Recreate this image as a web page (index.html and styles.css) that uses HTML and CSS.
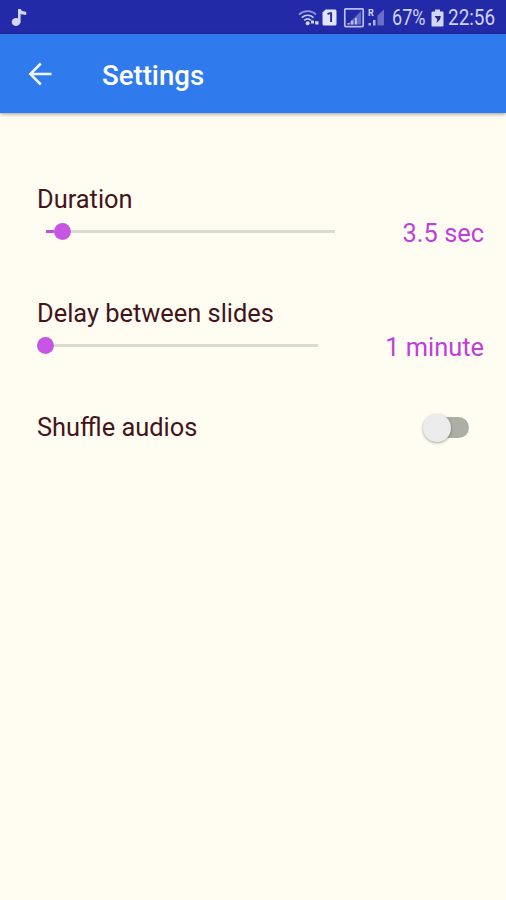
FILE: index.html
```
<!DOCTYPE html>
<html lang="en">
<head>
  <meta charset="UTF-8">
  <meta name="viewport" content="width=device-width, initial-scale=1.0">
  <title>Settings</title>
  <link rel="stylesheet" href="styles.css">
</head>
<body>
  <!-- Status bar -->
  <div class="status-bar">
    <svg class="note-icon" width="16" height="19" viewBox="0 0 16 19">
      <ellipse cx="5" cy="14" rx="4.3" ry="4"/>
      <path d="M7 1h2.600c.8 2 2.600 2.500 5.600 2.700v3.300c-2 0-4-.2-5.600-.9v8.400H7z"/>
    </svg>
    <div class="status-icons">
      <svg width="88" height="20" viewBox="0 0 88 20">
        <!-- wifi -->
        <g fill="none" stroke="#c6c9f0" stroke-width="1.7">
          <path d="M1 6.600c5-4.600 12.200-4.600 17 0" opacity=".7"/>
          <path d="M3.700 9.600c3.600-3 8.400-3 11.800 0"/>
          <path d="M6.200 12.400c2-1.800 4.800-1.800 6.800 0"/>
        </g>
        <circle cx="9.700" cy="15.200" r="2"/>
        <path d="M13 15.500V12.500h3v3zM17.200 13.300h3.300v3.300h-3.300z"/>
        <!-- sim card -->
        <path d="M27.500 1.500H37a1.500 1.500 0 0 1 1.500 1.500v13a1.500 1.500 0 0 1-1.500 1.500H26a1.500 1.500 0 0 1-1.500-1.500V4.500z" class="sim"/>
        <path d="M29.500 6.200l2.400-1h1.200v8.800" fill="none" stroke="#232aa5" stroke-width="1.900"/>
        <!-- boxed signal -->
        <rect x="46.800" y="0.800" width="18.400" height="17.800" rx="1" fill="none" stroke="#b9bdec" stroke-width="1.700"/>
        <path d="M49.500 16.500L63 3v13.500z" opacity=".38"/>
        <path d="M49.500 16.500v-1.500h2v1.500zM53 16.500v-4h2.200v4zM57 16.500V10h1.800v6.500z" opacity=".8"/>
        <!-- roaming signal -->
        <text x="70" y="8" class="roaming">R</text>
        <path d="M70.500 17.500v-2.500h2.500v2.500zM75 17.500V12h2.500v5.500z" opacity=".8"/>
        <path d="M79.500 17.500V7.500l6.500-6v16z" opacity=".4"/>
      </svg>
      <span class="status-text percent">67%</span>
      <svg class="battery-icon" width="13" height="18" viewBox="0 0 13 18">
        <path d="M4 0.500h5v2h2.500a1 1 0 0 1 1 1V16.500a1 1 0 0 1-1 1h-10a1 1 0 0 1-1-1V3.500a1 1 0 0 1 1-1H4z"/>
        <path d="M3.500 7h6.300L9 10.500 5.500 14l.8-3.600z" fill="#232a80"/>
      </svg>
      <span class="status-text clock">22:56</span>
    </div>
  </div>

  <!-- App bar -->
  <header class="app-bar">
    <svg class="back-icon" width="24" height="24" viewBox="0 0 24 24">
      <path d="M12.800 1.500L2.300 12l10.500 10.500M2.300 12H23.500"/>
    </svg>
    <h1>Settings</h1>
  </header>

  <main class="settings">
    <div class="setting">
      <div class="control">
        <label>Duration</label>
        <div class="slider duration">
          <span class="filled"></span>
          <span class="thumb"></span>
          <span class="track"></span>
        </div>
      </div>
      <span class="value">3.5 sec</span>
    </div>

    <div class="setting">
      <div class="control">
        <label>Delay between slides</label>
        <div class="slider delay">
          <span class="thumb"></span>
          <span class="track"></span>
        </div>
      </div>
      <span class="value">1 minute</span>
    </div>

    <div class="setting toggle-row">
      <label>Shuffle audios</label>
      <div class="switch"><span class="knob"></span></div>
    </div>
  </main>
</body>
</html>
```

FILE: styles.css
```
* {
  box-sizing: border-box;
}

body {
  margin: 0;
  min-height: 900px;
  font-family: Roboto, "Liberation Sans", sans-serif;
  background-color: #fffcf1;
  color: #43141a;
}

.status-bar {
  display: flex;
  justify-content: space-between;
  height: 34px;
  padding: 8px 11px 0 11px;
  background-color: #232aa8;
  color: #cfd3f5;
}

.status-bar svg {
  fill: #d3d7f7;
  flex: none;
}

.status-bar .sim {
  fill: #e2e4fb;
}

.status-icons {
  display: flex;
}

.roaming {
  font-size: 9px;
  font-weight: bold;
}

.status-text {
  font-size: 21.5px;
  line-height: 20px;
  white-space: nowrap;
  transform-origin: left;
}

.percent {
  width: 34px;
  margin-left: 6px;
  transform: scaleX(0.84);
}

.battery-icon {
  margin: 1px 4px 0 5px;
}

.clock {
  width: 47px;
  transform: scaleX(0.88);
}

.app-bar {
  display: flex;
  align-items: center;
  height: 79px;
  padding-left: 28px;
  background-color: #2f7bed;
  box-shadow: 0 1px 4px rgba(0, 0, 0, 0.4);
  color: #fff;
}

.back-icon {
  fill: none;
  stroke: #f2f6ff;
  stroke-width: 2.5;
}

.app-bar h1 {
  margin: 3px 0 0 50px;
  font-size: 27.6px;
  font-weight: 500;
}

.settings {
  padding: 71px 22px 0 37px;
}

.setting {
  display: flex;
  justify-content: space-between;
  height: 114px;
  font-size: 25.4px;
  line-height: 30px;
}

.control label {
  display: block;
}

.slider {
  display: flex;
  align-items: center;
  height: 17px;
  margin-top: 9px;
}

.duration {
  width: 298px;
  padding-left: 9px;
}

.delay {
  width: 281px;
}

.filled {
  width: 8px;
  height: 3px;
  background-color: #c04fdc;
}

.thumb {
  width: 17px;
  height: 17px;
  border-radius: 50%;
  background-color: #c655e3;
}

.track {
  flex: 1;
  height: 3px;
  background-color: #dddad0;
}

.value {
  margin-top: 34px;
  color: #be3fd9;
}

.toggle-row {
  padding-right: 15px;
}

.switch {
  display: flex;
  align-items: center;
  width: 42px;
  height: 21px;
  margin-top: 5px;
  border-radius: 11px;
  background-color: #adaea6;
}

.knob {
  width: 28px;
  height: 28px;
  margin-left: -4px;
  border-radius: 50%;
  background-color: #ececec;
  box-shadow: 0 1px 3px rgba(0, 0, 0, 0.35);
}
```
